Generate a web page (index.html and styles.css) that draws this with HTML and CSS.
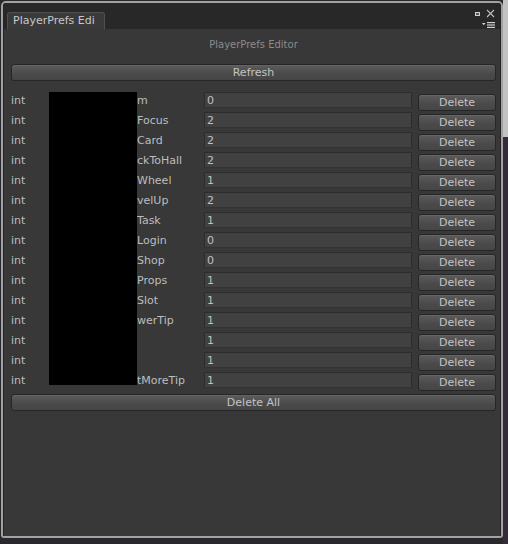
FILE: index.html
```html
<!DOCTYPE html>
<html>
<head>
<meta charset="utf-8">
<link rel="stylesheet" href="styles.css">
</head>
<body>
<div class="window">
  <div class="frame">
    <div class="header">
      <div class="tab">PlayerPrefs Edi</div>
      <svg class="controls" width="24" height="20" viewBox="0 0 24 20">
        <rect x="2.5" y="4.5" width="4" height="3" fill="#5a5a5a" stroke="#cfcfcf" stroke-width="1"/>
        <path d="M14 2 L21 9 M21 2 L14 9" stroke="#bdbdbd" stroke-width="1.1" fill="none"/>
        <path d="M9 15 L12.5 15 L10.75 17.2 Z" fill="#d0d0d0"/>
        <rect x="14" y="14" width="8" height="1.2" fill="#d0d0d0"/>
        <rect x="14" y="16.4" width="8" height="1.2" fill="#d0d0d0"/>
        <rect x="14" y="18.8" width="8" height="1.2" fill="#d0d0d0"/>
      </svg>
    </div>
    <div class="content">
      <div class="title">PlayerPrefs Editor</div>
      <div class="btn wide refresh">Refresh</div>
      <div class="rows">
        <div class="row"><span class="type">int</span><span class="key">m</span><div class="field">0</div><div class="btn del">Delete</div></div>
        <div class="row"><span class="type">int</span><span class="key">Focus</span><div class="field">2</div><div class="btn del">Delete</div></div>
        <div class="row"><span class="type">int</span><span class="key">Card</span><div class="field">2</div><div class="btn del">Delete</div></div>
        <div class="row"><span class="type">int</span><span class="key">ckToHall</span><div class="field">2</div><div class="btn del">Delete</div></div>
        <div class="row"><span class="type">int</span><span class="key">Wheel</span><div class="field">1</div><div class="btn del">Delete</div></div>
        <div class="row"><span class="type">int</span><span class="key">velUp</span><div class="field">2</div><div class="btn del">Delete</div></div>
        <div class="row"><span class="type">int</span><span class="key">Task</span><div class="field">1</div><div class="btn del">Delete</div></div>
        <div class="row"><span class="type">int</span><span class="key">Login</span><div class="field">0</div><div class="btn del">Delete</div></div>
        <div class="row"><span class="type">int</span><span class="key">Shop</span><div class="field">0</div><div class="btn del">Delete</div></div>
        <div class="row"><span class="type">int</span><span class="key">Props</span><div class="field">1</div><div class="btn del">Delete</div></div>
        <div class="row"><span class="type">int</span><span class="key">Slot</span><div class="field">1</div><div class="btn del">Delete</div></div>
        <div class="row"><span class="type">int</span><span class="key">werTip</span><div class="field">1</div><div class="btn del">Delete</div></div>
        <div class="row"><span class="type">int</span><span class="key"></span><div class="field">1</div><div class="btn del">Delete</div></div>
        <div class="row"><span class="type">int</span><span class="key"></span><div class="field">1</div><div class="btn del">Delete</div></div>
        <div class="row"><span class="type">int</span><span class="key">tMoreTip</span><div class="field">1</div><div class="btn del">Delete</div></div>
      </div>
      <div class="btn wide delete-all">Delete All</div>
      <div class="redact"></div>
    </div>
  </div>
</div>
</body>
</html>
```

FILE: styles.css
```css
html, body {
  margin: 0;
  padding: 0;
}
body {
  width: 508px;
  height: 544px;
  overflow: hidden;
  background: linear-gradient(#c2c2c2 137px, #342d39 137px) right top / 5px 100% no-repeat, #2a282c;
  font-family: "DejaVu Sans", "Liberation Sans", sans-serif;
  font-size: 11px;
  color: #bdbdbd;
}
.window {
  box-sizing: border-box;
  margin: 1px 0 0 1px;
  width: 502px;
  height: 537px;
  border: 2px solid #a2a2a2;
  border-radius: 5px 5px 3px 3px;
  overflow: hidden;
  background: #282828;
}
.frame {
  box-sizing: border-box;
  height: 100%;
  display: flex;
  flex-direction: column;
  border-left: 1px solid #242424;
  border-right: 1px solid #242424;
}
.header {
  height: 26px;
  flex: none;
  display: flex;
  justify-content: space-between;
  align-items: flex-start;
  background: #282828;
}
.tab {
  box-sizing: border-box;
  margin: 9px 0 0 3px;
  width: 98px;
  height: 17px;
  padding: 0 0 0 5px;
  border: 1px solid #505050;
  border-bottom: none;
  border-radius: 3px 3px 0 0;
  background: #3a3a3a;
  color: #c8c8c8;
  line-height: 16px;
  white-space: nowrap;
  overflow: hidden;
}
.controls {
  display: block;
  margin: 5px 3px 0 0;
}
.content {
  position: relative;
  flex: 1;
  background: #383838;
  padding: 8px 4px 0 7px;
}
.title {
  height: 16px;
  line-height: 16px;
  text-align: center;
  font-size: 10px;
  color: #8c8c8c;
}
.btn {
  box-sizing: border-box;
  height: 17px;
  line-height: 15px;
  border: 1px solid #262626;
  border-radius: 3px;
  background: linear-gradient(#5c5c5c, #4a4a4a 60%, #464646);
  box-shadow: inset 0 1px 0 rgba(255,255,255,0.06);
  color: #c4c4c4;
  text-align: center;
}
.refresh {
  margin-top: 11px;
}
.delete-all {
  margin-top: 3px;
}
.rows {
  margin-top: 10px;
}
.row {
  display: flex;
  align-items: flex-start;
  height: 20px;
}
.type {
  width: 38px;
  line-height: 19px;
  flex: none;
}
.key {
  width: 155px;
  box-sizing: border-box;
  padding-left: 88px;
  line-height: 19px;
  flex: none;
  white-space: nowrap;
  overflow: hidden;
}
.field {
  box-sizing: border-box;
  width: 208px;
  height: 16px;
  margin-top: 1px;
  flex: none;
  padding-left: 2px;
  line-height: 15px;
  border: 1px solid #2c2c2c;
  border-bottom-color: #333333;
  background: #414141;
  color: #c0c0c0;
}
.del {
  width: 78px;
  margin: 3px 0 0 6px;
  flex: none;
}
.redact {
  position: absolute;
  left: 45px;
  top: 63px;
  width: 88px;
  height: 293px;
  background: #000;
}
```
